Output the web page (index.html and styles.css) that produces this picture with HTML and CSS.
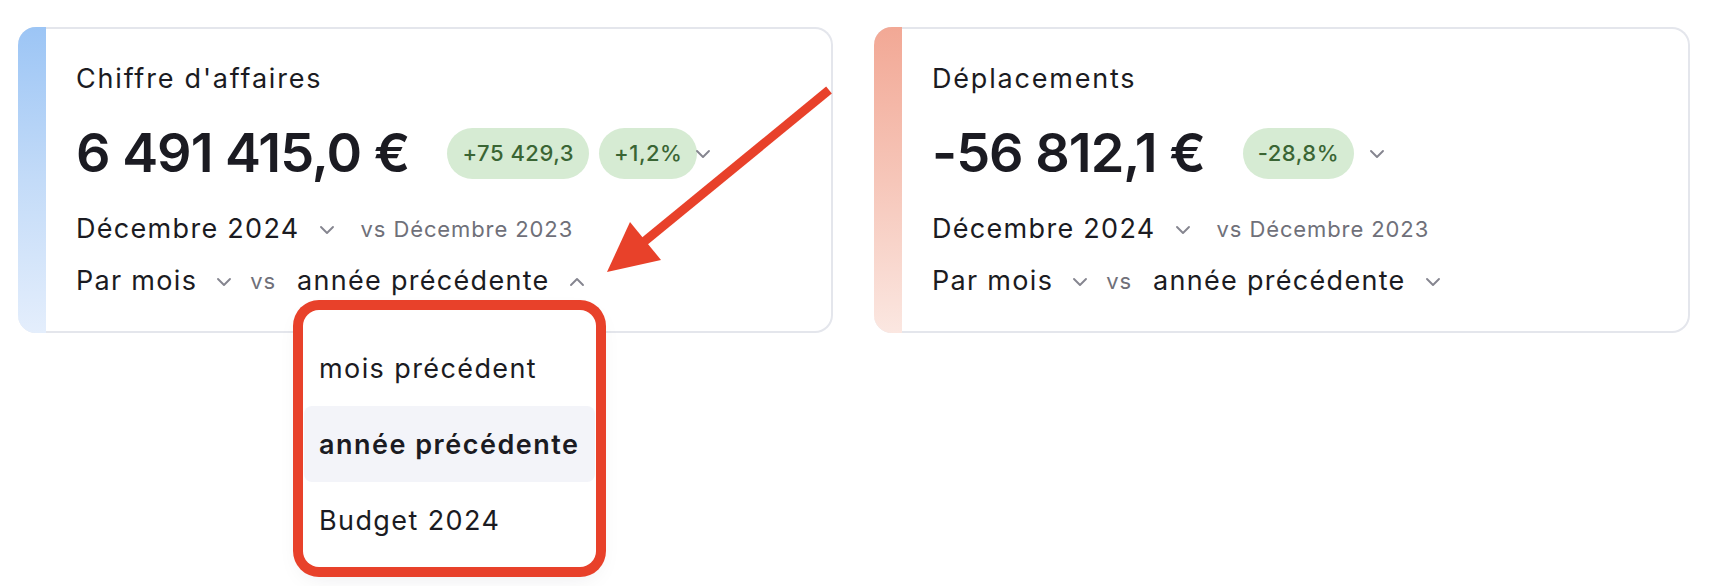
FILE: index.html
```html
<!DOCTYPE html>
<html lang="fr">
<head>
<meta charset="utf-8">
<title>KPI</title>
<link rel="stylesheet" href="styles.css">
</head>
<body>
<div class="page">
  <div class="card">
    <div class="stripe stripe-blue"></div>
    <div class="content">
      <div class="title">Chiffre d'affaires</div>
      <div class="value-row">
        <div class="value">6 491 415,0 €</div>
        <span class="badge badge-first">+75 429,3</span>
        <span class="badge badge-second">+1,2%</span>
        <svg class="chev chev-tight" viewBox="0 0 16 10"><path d="M2 2l6 6 6-6"/></svg>
      </div>
      <div class="row row-date">
        <span class="sel">Décembre 2024</span>
        <svg class="chev" viewBox="0 0 16 10"><path d="M2 2l6 6 6-6"/></svg>
        <span class="vs-date">vs Décembre 2023</span>
      </div>
      <div class="row row-period">
        <span class="sel">Par mois</span>
        <svg class="chev" viewBox="0 0 16 10"><path d="M2 2l6 6 6-6"/></svg>
        <span class="vs">vs</span>
        <span class="sel">année précédente</span>
        <svg class="chev" viewBox="0 0 16 10"><path d="M2 8l6-6 6 6"/></svg>
      </div>
    </div>
    <div class="menu">
      <div class="menu-item">mois précédent</div>
      <div class="menu-item menu-item-active">année précédente</div>
      <div class="menu-item">Budget 2024</div>
    </div>
  </div>

  <div class="card">
    <div class="stripe stripe-red"></div>
    <div class="content">
      <div class="title">Déplacements</div>
      <div class="value-row">
        <div class="value">-56 812,1 €</div>
        <span class="badge badge-first">-28,8%</span>
        <svg class="chev chev-loose" viewBox="0 0 16 10"><path d="M2 2l6 6 6-6"/></svg>
      </div>
      <div class="row row-date">
        <span class="sel">Décembre 2024</span>
        <svg class="chev" viewBox="0 0 16 10"><path d="M2 2l6 6 6-6"/></svg>
        <span class="vs-date">vs Décembre 2023</span>
      </div>
      <div class="row row-period">
        <span class="sel">Par mois</span>
        <svg class="chev" viewBox="0 0 16 10"><path d="M2 2l6 6 6-6"/></svg>
        <span class="vs">vs</span>
        <span class="sel">année précédente</span>
        <svg class="chev" viewBox="0 0 16 10"><path d="M2 2l6 6 6-6"/></svg>
      </div>
    </div>
  </div>

  <svg class="annotation" viewBox="0 0 1716 586" width="1716" height="586">
    <line x1="829" y1="90" x2="640" y2="245" stroke="#e8412a" stroke-width="9"/>
    <polygon points="607,272 630,222 661,260" fill="#e8412a"/>
  </svg>
</div>
</body>
</html>
```

FILE: styles.css
```css
* { box-sizing: border-box; }

html, body {
  margin: 0;
  padding: 0;
  background: #ffffff;
}

body {
  font-family: Inter, "Noto Sans", "Liberation Sans", sans-serif;
  color: #1b1b22;
  width: 1716px;
  height: 586px;
  overflow: hidden;
}

.page {
  position: relative;
  display: flex;
  gap: 41px;
  padding: 27px 0 0 18px;
  height: 586px;
}

.card {
  position: relative;
  display: flex;
  width: 815px;
  height: 306px;
  border: 2px solid #e4e6ec;
  border-left: 0;
  border-radius: 18px;
  background: #fff;
}

.card + .card { width: 816px; }

.stripe {
  width: 28px;
  flex: none;
  margin: -2px 0;
  border-radius: 18px 0 0 18px;
}

.stripe-blue { background: linear-gradient(180deg, #9cc5f5 0%, #c3dbf8 50%, #e4eefc 100%); }
.stripe-red { background: linear-gradient(180deg, #f2a895 0%, #f6c6b9 50%, #fbe7e1 100%); }

.content {
  padding: 34px 0 0 30px;
}

.title {
  font-size: 27px;
  line-height: 32px;
  letter-spacing: 1.8px;
}

.value-row {
  display: flex;
  align-items: center;
  margin-top: 28px;
  height: 60px;
}

.value {
  font-size: 54px;
  line-height: 60px;
  font-weight: 600;
  letter-spacing: -1px;
  margin-right: 38px;
}

.badge {
  display: inline-flex;
  align-items: center;
  height: 51px;
  padding: 0 15px;
  border-radius: 26px;
  background: #d6ebd3;
  color: #3a6534;
  font-size: 22px;
  font-weight: 500;
  letter-spacing: 0.5px;
}

.badge-second { margin-left: 10px; }

.chev {
  width: 16px;
  height: 10px;
  flex: none;
  fill: none;
  stroke: #85858f;
  stroke-width: 1.9;
  stroke-linecap: round;
  stroke-linejoin: round;
}

.chev-tight { margin-left: -2px; margin-top: 2px; }
.chev-loose { margin-left: 15px; margin-top: 2px; }

.row {
  display: flex;
  align-items: center;
  font-size: 27px;
  line-height: 30px;
  letter-spacing: 1.3px;
}

.row-date { margin-top: 31px; }
.row-period { margin-top: 22px; }

.row .chev { margin: 2px 18px 0 19px; }

.vs-date {
  font-size: 22px;
  color: #6f7079;
  margin-left: 8px;
  letter-spacing: 0.9px;
}

.vs {
  font-size: 22px;
  color: #6f7079;
  margin: 0 21px 0 0;
  letter-spacing: 0.9px;
}

.menu {
  position: absolute;
  left: 285px;
  top: 281px;
  width: 293px;
  padding: 20px 1px 9px;
  background: #fff;
  border-radius: 16px;
  box-shadow: 0 0 0 10px #e8412a, 0 8px 24px rgba(30, 30, 50, 0.10);
  z-index: 2;
}

.menu-item {
  height: 76px;
  display: flex;
  align-items: center;
  padding-left: 15px;
  font-size: 27px;
  letter-spacing: 1.4px;
  color: #1b1b22;
  border-radius: 8px;
  white-space: nowrap;
}

.menu-item-active {
  background: #f3f4f9;
  font-weight: 600;
  letter-spacing: 1.5px;
}

.annotation {
  position: absolute;
  left: 0;
  top: 0;
  pointer-events: none;
  z-index: 5;
}
```
